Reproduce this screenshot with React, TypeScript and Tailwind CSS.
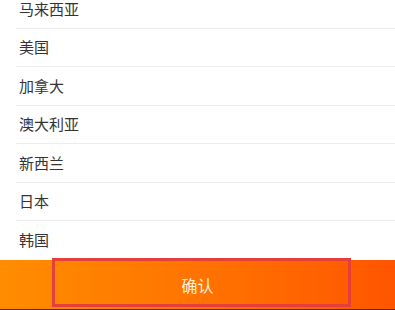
import React from "react";

const items = ["马来西亚", "美国", "加拿大", "澳大利亚", "新西兰", "日本", "韩国"];

export default function App() {
  return (
    <div
      className="relative w-[395px] h-[310px] overflow-hidden bg-white"
      style={{ fontFamily: '"Noto Sans CJK SC", "Noto Sans", sans-serif' }}
    >
      <div className="h-[260px] overflow-hidden">
        <div className="-mt-[9.4px] ml-4">
          {items.map((t, i) => (
            <div
              key={t}
              className={`h-[38.4px] flex items-center pl-[3px] text-[15px] text-[#333] ${
                i < items.length - 1 ? "border-b border-[#ececec]" : ""
              }`}
            >
              {t}
            </div>
          ))}
        </div>
      </div>
      <div className="h-[49px] flex items-center justify-center bg-gradient-to-r from-[#ff8d00] to-[#ff5500] text-[16px] text-[#fff1dc]">
        确认
      </div>
      <div className="h-px bg-[#3a3a3a]" />
      <div className="absolute left-[52px] top-[258px] w-[299px] h-[49px] border-[3px] border-[#e53f3c]" />
    </div>
  );
}
